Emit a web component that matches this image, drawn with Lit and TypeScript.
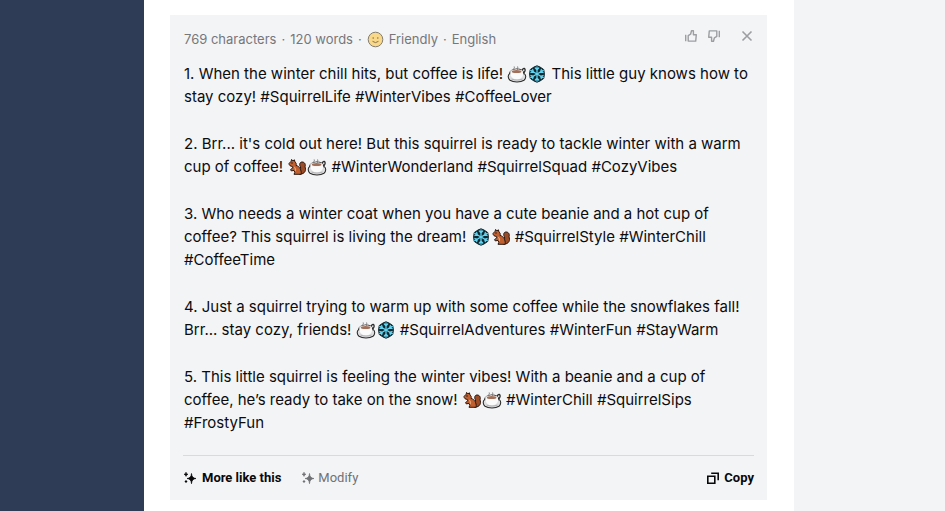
import { LitElement, html, css, svg } from "lit";
import { customElement } from "lit/decorators.js";

const cup = () => html`<svg class="emoji" viewBox="0 0 20 18" role="img" aria-label="hot coffee">
  <path d="M15.200 5.500c.6-3 3.600-2.400 2.800.3-.3 1.300-1 2-2 2.400" fill="none" stroke="#2b2b2b" stroke-width="1.300"/>
  <path d="M2.600 8.600C.6 10 .8 13.400 3 15.200c3.500 2.300 10.500 2.300 14 0 2.200-1.800 2.300-5.200.2-6.600z" fill="#dedee1" stroke="#2b2b2b" stroke-width="1.100" stroke-linejoin="round"/>
  <path d="M2.900 5.800c-.2 5.200 2.500 8.600 7 8.600s7-3.400 6.400-8.600z" fill="#fbfbfb"/>
  <path d="M4.500 14c3 1.400 8 1.400 11 0" fill="none" stroke="#a8a8ac" stroke-width=".9"/>
  <path d="M2.600 8.600C2.200 3 16.800 2.400 16.600 8" fill="none" stroke="#2b2b2b" stroke-width="1.100"/>
  <ellipse cx="9.600" cy="6.600" rx="6.400" ry="2.300" fill="#f6f3f1"/>
  <ellipse cx="9.600" cy="6.600" rx="4.800" ry="1.500" fill="#a0705a"/>
  <path d="M7.200 4.800C6 3.600 8 2.800 7.200 1.500M10.600 4.800C9.400 3.600 11.400 2.800 10.600 1.500" fill="none" stroke="#77777a" stroke-width="1"/>
</svg>`;

const snow = () => html`<svg class="emoji" viewBox="0 0 20 18" role="img" aria-label="snowflake">
  <path d="M10 .8l3 1.200 3.800 2.600.6 4.400-.6 4.400L13 16l-3 1.200L7 16l-3.800-2.600L2.600 9l.6-4.400L7 2z" fill="#0e2830" stroke="#0e2830" stroke-linejoin="round"/>
  <g fill="none" stroke="#62d3f0" stroke-width="1.300" stroke-linecap="round">
    ${[0, 60, 120, 180, 240, 300].map((a) => svg`<path transform=${`rotate(${a} 10 9)`} d="M10 9V1.800M8.300 3L10 4.800 11.700 3"/>`)}
  </g>
</svg>`;

const squirrel = () => html`<svg class="emoji" viewBox="0 0 20 18" role="img" aria-label="squirrel">
  <path d="M12.500 16c-1.500-3 2-4.700 1-7-1.500-2.300-.8-5 1.500-5 3 0 3.800 2.700 3 4.900 1.400 3 .2 7.300-5.500 7.300z" fill="#9c4c27" stroke="#2a1710"/>
  <path d="M2 5.500L4.200 3.200l.3-1.700L6 2.800l1.400-1L8 4c1.500 1 1.400 2.400 1 3.400 3.500.8 5.600 4.300 5.200 8.900H7l.8-1.900-.8-2-2.700.5-.8-1.300 2.300-1.700-.5-1.500C3.600 8.200 2 7.600 2 5.500z" fill="#c06030" stroke="#2a1710" stroke-linejoin="round"/>
  <path d="M7.300 9c1.400 1.400 1.300 2.900 1.100 4.200" fill="none" stroke="#e3a273" stroke-width="1.100"/>
  <circle cx="5" cy="5" r=".7" fill="#111"/>
</svg>`;

const sparkle = html`<svg class="glyph" viewBox="0 0 14 14" aria-hidden="true" fill="currentColor">
  <path d="M8.500 2.500Q8.800 7.200 13 7.500 8.800 7.800 8.500 12.700 8.200 7.800 4 7.500 8.200 7.200 8.500 2.500z" stroke="currentColor" stroke-width=".7"/>
  <path d="M3 1.200Q3.200 3.100 5 3.300 3.200 3.500 3 5.400 2.800 3.500 1 3.300 2.800 3.100 3 1.200z" stroke="currentColor" stroke-width=".6"/>
  <path d="M3 8.900l1.500 1.500L3 11.900l-1.500-1.500z"/>
</svg>`;

const thumb = (down: boolean) => html`<svg class="thumb ${down ? "down" : ""}" viewBox="0 0 14 14" aria-hidden="true" fill="none" stroke="currentColor" stroke-width="1.400" stroke-linejoin="round">
  <path d="M1.700 5.800v6.400M4.200 6.600l2.400-1.400.9-3.400h1.900v3.900h2.900l-.6 6.400H4.200z"/>
</svg>`;

@customElement("app-root")
export class AppRoot extends LitElement {
  static styles = css`
    :host { display: block; font-family: Inter, "Liberation Sans", sans-serif; color: #0c0c0e; }
    * { box-sizing: border-box; }
    .page { display: flex; min-height: 100vh; background: #f3f4f6; }
    .side { flex: 0 0 144px; background: #2f3c56; }
    .content { flex: 1; min-width: 0; margin-right: 151px; padding: 15px 27px 11px 26px; background: #fff; }
    .card { background: #f3f4f6; padding: 13px 13px 14px 13px; }
    header { display: flex; justify-content: space-between; align-items: flex-start; height: 34px; color: #76777b; }
    .meta { display: flex; align-items: center; gap: 5px; font-size: 13px; line-height: 23px; white-space: nowrap; }
    .smile { width: 17px; height: 17px; }
    .tools { display: flex; gap: 9px; }
    button { display: flex; align-items: center; border: 0; padding: 0; background: none; color: inherit; cursor: pointer; }
    .tools button { height: 16px; color: #9c9ea1; }
    .tools .close { margin-left: 10px; }
    .thumb { display: block; width: 14px; height: 14px; }
    .down { transform: rotate(180deg); }
    .posts { display: flex; flex-direction: column; gap: 24px; }
    p { margin: 0; font-size: 15px; line-height: 23px; }
    .meta, .posts { padding-left: 1px; }
    .emoji { width: 20px; height: 18px; vertical-align: -4px; }
    footer { display: flex; gap: 20px; margin-top: 21px; padding-top: 14px; border-top: 1px solid #d9dadd; }
    footer button { gap: 5px; font: 700 13px/16px Roboto, "Liberation Sans", sans-serif; color: #08080a; }
    footer .quiet { gap: 3px; font-weight: 400; color: #707174; }
    footer .copy { gap: 4px; margin-left: auto; }
    .glyph { width: 14px; height: 14px; }
  `;

  render() {
    return html`<div class="page">
      <aside class="side"></aside>
      <main class="content">
        <article class="card">
          <header>
            <div class="meta"><span>769 characters</span><span>·</span><span>120 words</span><span>·</span><svg class="smile" viewBox="0 0 17 17" role="img" aria-label="smile"><circle cx="8.500" cy="8.500" r="7.300" fill="#fad889" stroke="#827c6f"/><circle cx="6.200" cy="7" r=".8" fill="#887448"/><circle cx="10.800" cy="7" r=".8" fill="#887448"/><path d="M5.500 10.300q3 2.600 6 0" fill="none" stroke="#887448"/></svg><span>Friendly</span><span>·</span><span>English</span></div>
            <div class="tools">
              <button aria-label="Like">${thumb(false)}</button>
              <button aria-label="Dislike">${thumb(true)}</button>
              <button class="close" aria-label="Close"><svg class="glyph" viewBox="0 0 14 14" fill="none" stroke="currentColor" stroke-width="1.600"><path d="M2.500 2.500l9 9M11.500 2.500l-9 9"/></svg></button>
            </div>
          </header>
          <div class="posts">
            <p>1. When the winter chill hits, but coffee is life! ${cup()}${snow()} This little guy knows how to stay cozy! #SquirrelLife #WinterVibes #CoffeeLover</p>
            <p>2. Brr... it's cold out here! But this squirrel is ready to tackle winter with a warm cup of coffee! ${squirrel()}${cup()} #WinterWonderland #SquirrelSquad #CozyVibes</p>
            <p>3. Who needs a winter coat when you have a cute beanie and a hot cup of coffee? This squirrel is living the dream! ${snow()}${squirrel()} #SquirrelStyle #WinterChill #CoffeeTime</p>
            <p>4. Just a squirrel trying to warm up with some coffee while the snowflakes fall! Brr... stay cozy, friends! ${cup()}${snow()} #SquirrelAdventures #WinterFun #StayWarm</p>
            <p>5. This little squirrel is feeling the winter vibes! With a beanie and a cup of coffee, he’s ready to take on the snow! ${squirrel()}${cup()} #WinterChill #SquirrelSips #FrostyFun</p>
          </div>
          <footer>
            <button>${sparkle}More like this</button>
            <button class="quiet">${sparkle}Modify</button>
            <button class="copy"><svg class="glyph" viewBox="0 0 14 14" aria-hidden="true" fill="none" stroke="currentColor" stroke-width="1.600"><path d="M1.800 5.300h7v7h-7zM5.200 2.200h7V9.200"/></svg>Copy</button>
          </footer>
        </article>
      </main>
    </div>`;
  }
}
